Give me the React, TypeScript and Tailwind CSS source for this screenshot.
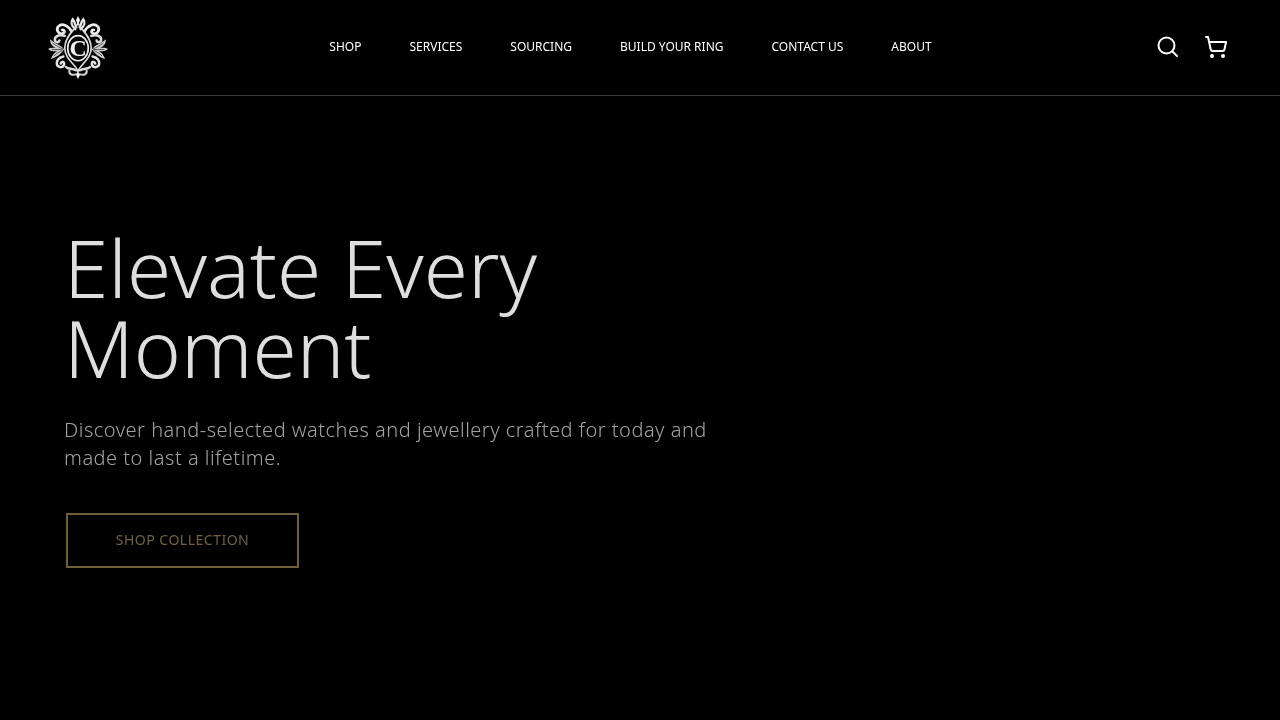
import React from 'react';
import { ShoppingCart } from 'lucide-react';

const navItems = ['SHOP', 'SERVICES', 'SOURCING', 'BUILD YOUR RING', 'CONTACT US', 'ABOUT'];

const CrestSide: React.FC<{ flip?: boolean }> = ({ flip }) => (
  <g transform={flip ? 'translate(180 0) scale(-1 1)' : undefined} fill="none" strokeLinecap="round">
    {/* top curl beside the spike */}
    <path d="M82 40C70 30 68 18 74 10C80 16 82 28 85 34" stroke="#e8e8e8" strokeWidth="7" />
    {/* upper scroll */}
    <path d="M70 46C60 28 42 20 30 32C22 44 34 58 46 52C52 48 48 40 42 42" stroke="#ececec" strokeWidth="8" />
    {/* shoulder scroll */}
    <path d="M50 60C38 56 22 58 20 70C20 80 32 82 34 74" stroke="#dcdcdc" strokeWidth="7.5" />
    {/* side leaves */}
    <path d="M48 100C38 86 20 84 6 70C6 86 14 92 24 97C14 95 8 95 0 99C8 108 18 108 28 104C20 110 12 118 8 130C22 126 38 116 48 100Z" fill="#d0d0d0" />
    <path d="M44 99C34 95 24 90 14 82M42 101C32 101 22 101 12 101M42 104C34 108 26 112 18 120" stroke="#3c3c3c" strokeWidth="2.5" />
    {/* lower scrolls */}
    <path d="M46 122C32 124 22 136 28 150C36 158 50 154 48 142C46 136 38 138 38 143" stroke="#e6e6e6" strokeWidth="7.5" />
    <path d="M84 164C72 156 62 162 54 154" stroke="#dedede" strokeWidth="7" />
    <path d="M84 176C70 180 62 174 64 164" stroke="#d4d4d4" strokeWidth="6" />
    {/* pointed oval round the medallion */}
    <path d="M90 22C84 38 50 60 50 96C50 128 80 144 90 166" stroke="#dcdcdc" strokeWidth="5" />
  </g>
);

const Logo = () => (
  <svg width="60" height="63" viewBox="0 0 180 190" aria-hidden="true">
    <CrestSide />
    <CrestSide flip />
    <path d="M90 0L96 12L90 28L84 12Z" fill="#f2f2f2" />
    <path d="M90 166L96 178L90 190L84 178Z" fill="#f2f2f2" />
    <ellipse cx="90" cy="97" rx="31" ry="38" fill="#0a0a0a" stroke="#f0f0f0" strokeWidth="5" />
    <text x="90" y="122" textAnchor="middle" fontFamily="'Liberation Serif', serif" fontWeight="700" fontSize="72" fill="#f4f4f4">C</text>
  </svg>
);

export default function App() {
  return (
    <div className="min-h-[720px] bg-black font-['Noto_Sans',sans-serif] antialiased">
      <div className="will-change-transform">
        <header className="flex h-[96px] items-center justify-between border-b border-[#3a3a3a] pl-12 pr-[52px]">
          <Logo />
          <nav className="flex -translate-x-[1.5px] items-center gap-12 pb-[2px]">
            {navItems.map((item) => (
              <a key={item} href="#" className="text-xs leading-4 text-white">
                {item}
              </a>
            ))}
          </nav>
          <div className="flex items-center gap-6 pb-[2px] text-white">
            <svg width="24" height="24" viewBox="0 0 24 24" fill="none" stroke="currentColor" strokeWidth="2" strokeLinecap="round" aria-hidden="true">
              <circle cx="10.5" cy="10.5" r="8" />
              <path d="M16.5 16.5L21 21" />
            </svg>
            <ShoppingCart size={24} strokeWidth={2} />
          </div>
        </header>

        <section className="px-16 pt-[131px]">
          <h1 className="w-[640px] text-[80px] font-light leading-[80px] text-[#dedede]">
            Elevate Every Moment
          </h1>
          <p className="mt-[29px] w-[700px] text-xl font-light leading-7 tracking-wide text-[#a3a3a3]">
            Discover hand-selected watches and jewellery crafted for today and made to last a lifetime.
          </p>
          <button className="ml-[2px] mt-[41px] h-[55px] w-[233px] border-2 border-[#6f5e38] pb-[2px] text-sm tracking-[0.5px] text-[#6f6244]">
            SHOP COLLECTION
          </button>
        </section>
      </div>
    </div>
  );
}
